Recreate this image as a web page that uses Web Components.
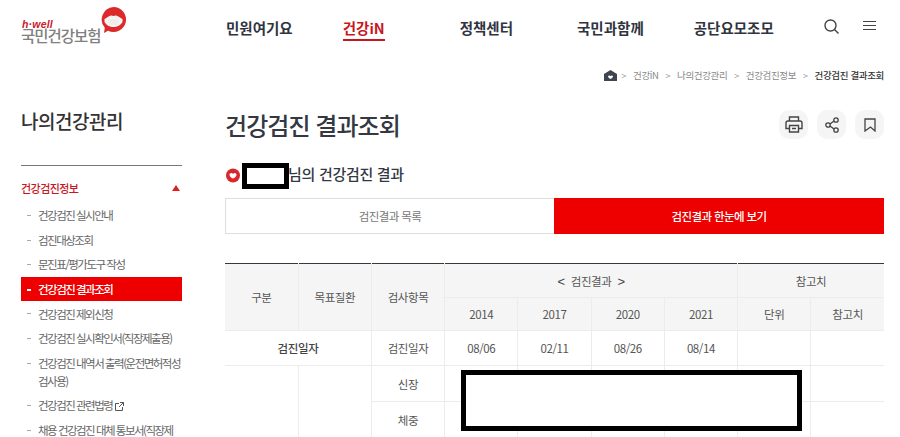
<!DOCTYPE html>
<html lang="ko">
<head>
<meta charset="utf-8">
<title>건강검진 결과조회</title>
<style>
    html, body { margin: 0; height: 437px; overflow: hidden; background: #fff; }
    body { font-family: "Noto Sans CJK KR", "Noto Sans", sans-serif; color: #333; }
</style>
</head>
<body>
<hw-header></hw-header>
<hw-breadcrumb></hw-breadcrumb>
<hw-layout>
    <hw-sidenav slot="side"></hw-sidenav>
    <hw-page-head title="건강검진 결과조회"></hw-page-head>
    <hw-subtitle text="님의 건강검진 결과"></hw-subtitle>
    <hw-tabs></hw-tabs>
    <hw-result-table></hw-result-table>
</hw-layout>

<script>
class Header extends HTMLElement {
    constructor() {
        super();
        this.attachShadow({ mode: 'open' });
        this.shadowRoot.innerHTML = `
            <style>
                :host { display: flex; height: 55px; align-items: flex-start; position: relative; }
                #logo { width: 226px; flex: none; height: 45px; padding: 6px 0 0 21px; box-sizing: border-box; display: flex; }
                #brand { display: flex; flex-direction: column; width: 79px; padding-top: 14px; }
                #hwell { color: #c8202c; font: italic 700 10.500px/8px "Liberation Sans", sans-serif; letter-spacing: .2px; padding-left: 1px; }
                #name { color: #808080; font-size: 15.500px; line-height: 15px; font-weight: 500; letter-spacing: -1px; white-space: nowrap; }
                nav { display: flex; padding-top: 17px; }
                a { font-size: 14.500px; line-height: 22px; font-weight: 700; color: #2f3440; white-space: nowrap; letter-spacing: 0; height: 22px; }
                a.on { color: #c8161e; border-bottom: 2px solid #c8161e; }
                a:nth-child(2) { margin-left: 50px; }
                a:nth-child(3) { margin-left: 75px; }
                a:nth-child(4) { margin-left: 64px; }
                a:nth-child(5) { margin-left: 50px; }
                #tools { display: flex; gap: 24px; margin-left: auto; padding: 19px 24px 0 0; }
                svg { display: block; }
            </style>
            <div id="logo">
                <div id="brand"><span id="hwell">h·well</span><span id="name">국민건강보험</span></div>
                <svg width="27" height="28" viewBox="0 0 27 28">
                    <path d="M13.5 1a12.5 12.5 0 1 1-5.500 23.700L4 27l.8-5.300A12.500 12.500 0 0 1 13.500 1z" fill="#dc2a2c"/>
                    <path d="M4.500 13c2-.5 3.500-3 6.500-3.500 1-.2 1.800.5 2.500.5s1.500-.7 2.500-.5c3 .5 4.500 3 6.500 3.500v3c-1.500 3-5.500 5-9 5s-7.500-2-9-5z" fill="#f6f3f0"/>
                    <path d="M8 14h11M8 16h11M9 18h9" stroke="#e4e0dc" stroke-width=".7"/>
                </svg>
            </div>
            <nav>
                <a>민원여기요</a><a class="on">건강iN</a><a>정책센터</a><a>국민과함께</a><a>공단요모조모</a>
            </nav>
            <div id="tools">
                <svg width="15" height="15" viewBox="0 0 15 15" fill="none" stroke="#444" stroke-width="1.400"><circle cx="6.500" cy="6.500" r="5.500"/><path d="M10.500 10.500L14.500 14.500"/></svg>
                <svg width="13" height="12" viewBox="0 0 13 12" fill="none" stroke="#444" stroke-width="1"><path d="M0 2.500h13M0 6.500h13M0 10.500h13"/></svg>
            </div>
        `;
    }
}

class Breadcrumb extends HTMLElement {
    constructor() {
        super();
        this.attachShadow({ mode: 'open' });
        this.shadowRoot.innerHTML = `
            <style>
                :host { display: flex; justify-content: flex-end; align-items: center; gap: 5.900px; height: 20px; padding: 10px 16px 0 0; font-size: 9.500px; color: #888; letter-spacing: -.35px; white-space: nowrap; }
                b { font-weight: 500; color: #333; }
                i { font-style: normal; color: #999; font-size: 9px; padding: 0 1px; }
                svg { display: block; margin-right: -2.400px; }
            </style>
            <svg width="13" height="13" viewBox="0 0 13 13"><path d="M6.500 1L13 5v7H0V5z" fill="#3e4450"/><path d="M4 7c1-1 2-.6 2.500 0C7 6.400 8 6 9 7c0 1.500-1.500 2.500-2.500 3C5.500 9.500 4 8.500 4 7z" fill="#fff"/></svg>
            <i>&gt;</i><span>건강iN</span><i>&gt;</i><span>나의건강관리</span><i>&gt;</i><span>건강검진정보</span><i>&gt;</i><b>건강검진 결과조회</b>
        `;
    }
}

class Layout extends HTMLElement {
    constructor() {
        super();
        this.attachShadow({ mode: 'open' });
        this.shadowRoot.innerHTML = `
            <style>
                :host { display: flex; gap: 43px; padding: 0 16px 0 21px; }
                #side { width: 161px; flex: none; }
                main { flex: 1; min-width: 0; display: flex; flex-direction: column; }
            </style>
            <div id="side"><slot name="side"></slot></div>
            <main><slot></slot></main>
        `;
    }
}

class SideNav extends HTMLElement {
    constructor() {
        super();
        this.attachShadow({ mode: 'open' });
        const items = [
            ['건강검진 실시안내'], ['검진대상조회'], ['문진표/평가도구 작성'], ['건강검진 결과조회', 'on'],
            ['건강검진 제외신청'], ['건강검진 실시확인서(직장제출용)'], ['건강검진 내역서 출력(운전면허적성<br>검사용)'],
            ['건강검진 관련법령', 'ext'], ['채용 건강검진 대체 통보서(직장제<br>출용)']
        ];
        const ext = `<svg width="9" height="9" viewBox="0 0 9 9" fill="none" stroke="#555" stroke-width="1"><path d="M4 1.500H.5v7h7V5M5 .5h3.500V4M8.500 .5L4 5"/></svg>`;
        const rows = items.map(([t, k]) => `<li class="${k === 'on' ? 'on' : ''}"><span>${t}${k === 'ext' ? ' ' + ext : ''}</span></li>`).join('');
        this.shadowRoot.innerHTML = `
            <style>
                :host { display: block; }
                h2 { margin: 22px 0 0; height: 58px; font-size: 19px; line-height: 28px; font-weight: 500; color: #333; letter-spacing: -.5px; border-bottom: 1px solid #777; }
                #group { display: flex; justify-content: space-between; align-items: center; height: 44px; font-size: 11px; font-weight: 500; color: #c8161e; letter-spacing: -.55px; padding-right: 2px; }
                #group i { width: 0; height: 0; border: 4px solid transparent; border-top: 0; border-bottom: 6px solid #e02020; }
                ul { list-style: none; margin: -7px 0 0; padding: 0; }
                li { padding: 3.300px 0 3.300px 17px; font-size: 11.500px; line-height: 18px; color: #666; letter-spacing: -1.500px; position: relative; white-space: nowrap; }
                li::before { content: ""; position: absolute; left: 6px; top: 12px; width: 4px; height: 1px; background: #aaa; }
                li.on { background: #ee0000; color: #fff; font-weight: 500; }
                li.on::before { background: #fff; height: 2px; }
                svg { vertical-align: -1px; margin-left: 1px; }
            </style>
            <h2>나의건강관리</h2>
            <div id="group"><span>건강검진정보</span><i></i></div>
            <ul>${rows}</ul>
        `;
    }
}

class PageHead extends HTMLElement {
    constructor() {
        super();
        this.attachShadow({ mode: 'open' });
        this.shadowRoot.innerHTML = `
            <style>
                :host { display: flex; justify-content: space-between; align-items: center; height: 59px; padding-top: 10px; }
                h1 { margin: 0; font-size: 24px; line-height: 34px; font-weight: 500; color: #333842; letter-spacing: -.95px; }
                #acts { display: flex; gap: 9px; }
                button { width: 29px; height: 29px; padding: 0; border: 0; border-radius: 10px; background: #f5f5f5; display: flex; align-items: center; justify-content: center; }
            </style>
            <h1></h1>
            <div id="acts">
                <button><svg width="18" height="17" viewBox="0 0 18 17" fill="none" stroke="#444" stroke-width="1.400"><path d="M4.500 5V1h9v4M4.500 12.500H1V7a2 2 0 0 1 2-2h12a2 2 0 0 1 2 2v5.500h-3.500"/><path d="M4.500 9.500h9V16h-9zM7 12.500h4"/></svg></button>
                <button><svg width="14" height="16" viewBox="0 0 14 16" fill="none" stroke="#444" stroke-width="1.300"><circle cx="11" cy="3" r="2.200"/><circle cx="3" cy="8" r="2.200"/><circle cx="11" cy="13" r="2.200"/><path d="M5 7l4-3M5 9l4 3"/></svg></button>
                <button><svg width="12" height="14" viewBox="0 0 12 14" fill="none" stroke="#444" stroke-width="1.300"><path d="M1 1h10v12L6.500 9 1 13z"/></svg></button>
            </div>
        `;
        this.shadowRoot.querySelector('h1').textContent = this.getAttribute('title');
    }
}

class Subtitle extends HTMLElement {
    constructor() {
        super();
        this.attachShadow({ mode: 'open' });
        this.shadowRoot.innerHTML = `
            <style>
                :host { display: flex; align-items: center; height: 27px; margin-top: 8px; font-size: 15px; font-weight: 500; color: #333842; letter-spacing: -.3px; }
                svg { display: block; margin: 0 2px 0 1px; flex: none; }
                #mask { width: 47px; height: 26px; box-sizing: border-box; border: 5px solid #000; background: #fff; flex: none; }
                span { padding-bottom: 4px; margin-left: -1px; }
            </style>
            <svg width="14" height="15" viewBox="0 0 14 15"><circle cx="7" cy="7.500" r="7" fill="#d9282c"/><path d="M3.500 6c1.500-1.500 2.700-1 3.500 0 .8-1 2-1.500 3.500 0 .3 2.500-2 4-3.500 4.500C5.500 10 3.200 8.500 3.500 6z" fill="#fff"/></svg>
            <div id="mask"></div><span></span>
        `;
        this.shadowRoot.querySelector('span').textContent = this.getAttribute('text');
    }
}

class Tabs extends HTMLElement {
    constructor() {
        super();
        this.attachShadow({ mode: 'open' });
        this.shadowRoot.innerHTML = `
            <style>
                :host { display: grid; grid-template-columns: 329px 1fr; height: 36px; margin-top: 9px; font-size: 11.500px; letter-spacing: -.6px; }
                div { display: flex; align-items: center; justify-content: center; box-sizing: border-box; }
                #a { border: 1px solid #ddd; border-right: 0; color: #777; }
                #b { background: #ee0000; color: #fff; font-weight: 500; }
            </style>
            <div id="a">검진결과 목록</div><div id="b">검진결과 한눈에 보기</div>
        `;
    }
}

class ResultTable extends HTMLElement {
    constructor() {
        super();
        this.attachShadow({ mode: 'open' });
        this.shadowRoot.innerHTML = `
            <style>
                :host { display: block; position: relative; margin-top: 29px; }
                table { width: 100%; table-layout: fixed; border-collapse: collapse; font-size: 11.500px; color: #555; letter-spacing: -.4px; }
                th, td { border: 1px solid #ececec; padding: 0; text-align: center; font-weight: 400; }
                th { background: #f5f5f5; color: #555; }
                tr:first-child th { border-top: 1px solid #333842; }
                tr > :first-child { border-left: 0; }
                tr > :last-child { border-right: 0; }
                tr:nth-child(1) { height: 34px; }
                tr:nth-child(2) { height: 33px; }
                tr:nth-child(3) { height: 35px; }
                tr:nth-child(4), tr:nth-child(5) { height: 36px; }
                tr:nth-child(3) td:first-child { font-weight: 500; color: #444; }
                .arrow { font-family: "Liberation Sans", sans-serif; font-size: 13px; color: #444; margin: 0 6px; }
                #redact { position: absolute; left: 236px; top: 107px; width: 341px; height: 61px; box-sizing: border-box; border: 5px solid #000; background: #fff; }
            </style>
            <table>
                <tr><th rowspan="2">구분</th><th rowspan="2">목표질환</th><th rowspan="2">검사항목</th>
                    <th colspan="4"><span class="arrow">&lt;</span>검진결과<span class="arrow">&gt;</span></th><th colspan="2">참고치</th></tr>
                <tr><th>2014</th><th>2017</th><th>2020</th><th>2021</th><th>단위</th><th>참고치</th></tr>
                <tr><td colspan="2">검진일자</td><td>검진일자</td><td>08/06</td><td>02/11</td><td>08/26</td><td>08/14</td><td></td><td></td></tr>
                <tr><td rowspan="2"></td><td rowspan="2"></td><td>신장</td><td></td><td></td><td></td><td></td><td></td><td></td></tr>
                <tr><td>체중</td><td></td><td></td><td></td><td></td><td></td><td></td></tr>
            </table>
            <div id="redact"></div>
        `;
    }
}

customElements.define('hw-header', Header);
customElements.define('hw-breadcrumb', Breadcrumb);
customElements.define('hw-layout', Layout);
customElements.define('hw-sidenav', SideNav);
customElements.define('hw-page-head', PageHead);
customElements.define('hw-subtitle', Subtitle);
customElements.define('hw-tabs', Tabs);
customElements.define('hw-result-table', ResultTable);
</script>
</body>
</html>
